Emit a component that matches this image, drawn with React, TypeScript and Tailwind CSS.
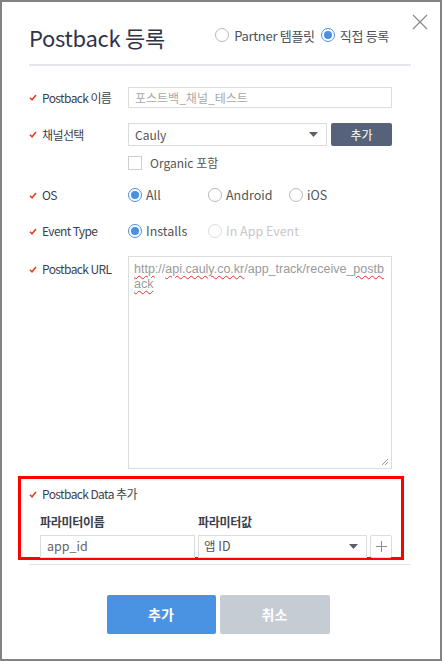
// Postback registration modal: header with mode radios, form rows,
// highlighted data-parameter block and footer buttons.

const FONT = { fontFamily: '"Noto Sans CJK KR", "Noto Sans", sans-serif' };
const URL_FONT = { fontFamily: '"Liberation Sans", Arial, sans-serif' };

function Check() {
  return (
    <svg width="8" height="7" viewBox="0 0 8 7" className="mr-[5px] shrink-0">
      <path d="M1 3.8 L3 5.8 L7 1" fill="none" stroke="#e8401c" strokeWidth="1.6" />
    </svg>
  );
}

function Radio({ on, disabled }: { on?: boolean; disabled?: boolean }) {
  return (
    <span
      className={`w-[14px] h-[14px] rounded-full border shrink-0 flex items-center justify-center bg-white ${
        on ? 'border-[#4a90e2]' : disabled ? 'border-[#dcdcdc]' : 'border-[#b9b9b9]'
      }`}
    >
      {on && <span className="w-[8px] h-[8px] rounded-full bg-[#4a90e2]" />}
    </span>
  );
}

function Label({ text, top = false }: { text: string; top?: boolean }) {
  return (
    <div
      className={`w-[99px] shrink-0 flex ${top ? 'items-start pt-[4px]' : 'items-center'} text-[12px] tracking-[-0.6px] text-[#3a3f4c]`}
    >
      <span className="flex items-center">
        <Check />
        {text}
      </span>
    </div>
  );
}

function Caret() {
  return (
    <svg width="9" height="5" viewBox="0 0 9 5">
      <path d="M0 0 L9 0 L4.5 5 Z" fill="#5a5f6b" />
    </svg>
  );
}

const squiggle = 'underline decoration-wavy decoration-[#e03030] decoration-1 underline-offset-2';

export default function App() {
  return (
    <div style={FONT} className="w-[443px] h-[661px] bg-white">
      <div className="w-[442px] h-[661px] border-2 border-[#828282] relative">
        <button className="absolute left-[410px] top-[12px]">
          <svg width="16" height="16" viewBox="0 0 16 16">
            <path d="M1 1 L15 15 M15 1 L1 15" stroke="#8a8a8a" strokeWidth="1.2" />
          </svg>
        </button>

        <div className="px-[27px]">
          {/* header */}
          <div className="flex items-end justify-between h-[49px] pr-[24px]">
            <h1 className="text-[22px] leading-none text-[#2e3447] tracking-[-0.3px] pb-[3px]">
              Postback 등록
            </h1>
            <div className="flex items-center text-[13px] text-[#4a4f5c] tracking-[-0.3px] pb-[6px]">
              <Radio />
              <span className="ml-[5px] mr-[6px]">Partner 템플릿</span>
              <Radio on />
              <span className="ml-[5px]">직접 등록</span>
            </div>
          </div>
          <div className="h-[2px] bg-[#e3e6eb] mt-[13px] w-[382px]" />

          {/* postback name */}
          <div className="flex mt-[21px] h-[21px]">
            <Label text="Postback 이름" />
            <div className="w-[264px] h-[21px] border border-[#dcdcdc] flex items-center px-[6px] text-[12px] text-[#a8a8a8]">
              포스트백_채널_테스트
            </div>
          </div>

          {/* channel */}
          <div className="flex mt-[15px] h-[23px]">
            <Label text="채널선택" />
            <div className="w-[199px] h-[23px] border border-[#dcdcdc] flex items-center justify-between pl-[6px] pr-[8px] text-[12px] text-[#555]">
              <span>Cauly</span>
              <Caret />
            </div>
            <button className="ml-[4px] w-[61px] h-[23px] rounded-[2px] bg-[#56617a] text-white text-[12px]">
              추가
            </button>
          </div>
          <div className="flex items-center mt-[8px] ml-[99px] text-[12px] text-[#555]">
            <span className="w-[14px] h-[14px] border border-[#cfcfcf] bg-white" />
            <span className="ml-[8px]">Organic 포함</span>
          </div>

          {/* os */}
          <div className="flex mt-[15px] h-[16px] items-center">
            <Label text="OS" />
            <div className="flex items-center text-[12.5px] text-[#555]">
              <div className="flex items-center w-[80px]">
                <Radio on />
                <span className="ml-[4px]">All</span>
              </div>
              <div className="flex items-center w-[81px]">
                <Radio />
                <span className="ml-[4px]">Android</span>
              </div>
              <div className="flex items-center">
                <Radio />
                <span className="ml-[4px]">iOS</span>
              </div>
            </div>
          </div>

          {/* event type */}
          <div className="flex mt-[20px] h-[16px] items-center">
            <Label text="Event Type" />
            <div className="flex items-center text-[12.5px] text-[#555]">
              <div className="flex items-center w-[80px]">
                <Radio on />
                <span className="ml-[4px]">Installs</span>
              </div>
              <div className="flex items-center text-[#c8c8c8]">
                <Radio disabled />
                <span className="ml-[4px]">In App Event</span>
              </div>
            </div>
          </div>

          {/* url */}
          <div className="flex mt-[17px]">
            <Label text="Postback URL" top />
            <div
              style={URL_FONT}
              className="w-[264px] h-[213px] border border-[#dcdcdc] relative px-[5px] pt-[5px] text-[12.5px] leading-[15px] text-[#9a9a9a] whitespace-nowrap"
            >
              <div>
                <span className={squiggle}>http</span>://<span className={squiggle}>api.cauly.co.kr</span>/app_track/receive_<span className={squiggle}>postb</span>
              </div>
              <div>
                <span className={squiggle}>ack</span>
              </div>
              <svg width="8" height="8" viewBox="0 0 8 8" className="absolute right-[2px] bottom-[2px]">
                <path d="M1 7 L7 1 M4 7 L7 4" stroke="#9a9a9a" strokeWidth="1" />
              </svg>
            </div>
          </div>
        </div>

        {/* postback data */}
        <div className="ml-[16px] mt-[7px] w-[386px] h-[84px] border-[3px] border-[#ff0000] pl-[19px] pt-[6px]">
          <div className="flex items-center text-[12px] tracking-[-0.6px] text-[#3a3f4c] -ml-[11px]">
            <Check />
            Postback Data 추가
          </div>
          <div className="flex mt-[10px] text-[12px] font-bold text-[#3a3f4c] tracking-[-0.3px]">
            <span className="w-[158px]">파라미터이름</span>
            <span>파라미터값</span>
          </div>
          <div className="flex mt-[4px] h-[23px]">
            <div className="w-[155px] h-[23px] border border-[#dcdcdc] flex items-center px-[6px] text-[12.5px] text-[#666]">
              app_id
            </div>
            <div className="ml-[3px] w-[169px] h-[23px] border border-[#dcdcdc] flex items-center justify-between pl-[5px] pr-[8px] text-[12.5px] text-[#555]">
              <span>앱 ID</span>
              <Caret />
            </div>
            <div className="ml-[3px] w-[22px] h-[23px] border border-[#dcdcdc] rounded-[2px] flex items-center justify-center">
              <svg width="11" height="11" viewBox="0 0 11 11">
                <path d="M5.5 0 V11 M0 5.5 H11" stroke="#8a8a8a" strokeWidth="1" />
              </svg>
            </div>
          </div>
        </div>

        <div className="ml-[27px] mt-[4px] h-[1px] w-[381px] bg-[#dfe3e8]" />

        {/* footer */}
        <div className="flex justify-center mt-[30px] gap-[4px] pr-[6px]">
          <button className="w-[109px] h-[39px] rounded-[2px] bg-[#4a93e3] text-white text-[14px] font-bold">
            추가
          </button>
          <button className="w-[110px] h-[39px] rounded-[2px] bg-[#c6ccd4] text-white text-[14px] font-bold">
            취소
          </button>
        </div>
      </div>
    </div>
  );
}
